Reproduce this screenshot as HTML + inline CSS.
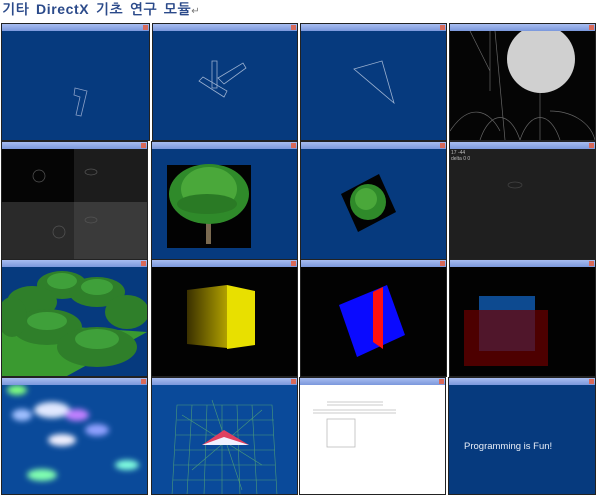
<!DOCTYPE html>
<html><head><meta charset="utf-8"><style>
body{margin:0;width:599px;height:499px;background:#fff;position:relative;overflow:hidden;font-family:"Liberation Sans","NanumGothic",sans-serif}
.t{position:absolute;left:2px;top:1px;font-size:14px;letter-spacing:0.6px;word-spacing:2px;font-weight:bold;color:#2b4a8a;font-family:"Liberation Sans","NanumGothic",sans-serif}
.w{position:absolute;border:1px solid #222;overflow:hidden}
.tb{position:absolute;left:0;top:0;right:0;height:7px;background:linear-gradient(#a8bdf0,#7b98dc)}
.tb:after{content:"";position:absolute;right:1px;top:1px;width:5px;height:5px;background:#d86a5a}
.c{position:absolute;left:0;top:7px;right:0;bottom:0}
svg{position:absolute;left:0;top:0}
</style></head><body>
<div class="t">기타 DirectX 기초 연구 모듈<span style="font-weight:normal;font-size:10px;color:#777">↵</span></div>

<!-- row1 -->
<div class="w" style="left:1px;top:23px;width:147px;height:116px"><div class="tb"></div><div class="c" style="background:#063a7e">
<svg width="147" height="109"><path d="M73 57l12 3-6 25-5-1 4-18-6-2z" fill="none" stroke="#8aa0c8" stroke-width="0.8"/></svg></div></div>
<div class="w" style="left:152px;top:23px;width:144px;height:116px"><div class="tb"></div><div class="c" style="background:#063a7e">
<svg width="144" height="109"><g fill="none" stroke="#9ab0d0" stroke-width="0.8"><path d="M59 30h5v27h-5z"/><path d="M46 50l25 16 3-6-24-14z"/><path d="M65 47l25-15 3 5-22 16z"/></g></svg></div></div>
<div class="w" style="left:300px;top:23px;width:145px;height:116px"><div class="tb"></div><div class="c" style="background:#063a7e">
<svg width="145" height="109"><path d="M53 38l28-8 12 42z" fill="none" stroke="#9ab0d0" stroke-width="0.8"/></svg></div></div>
<div class="w" style="left:449px;top:23px;width:145px;height:116px"><div class="tb"></div><div class="c" style="background:#050505">
<svg width="145" height="109"><g fill="none" stroke="#666" stroke-width="0.7"><path d="M40 0v60M45 0l10 109M20 0l20 40M90 20v89M30 109c10-30 30-30 40 0M70 109c10-30 30-30 40 0M0 100c20-30 40-20 50 0M100 80c20 0 40 10 45 29"/></g><circle cx="91" cy="28" r="34" fill="#d0d0d0"/></svg></div></div>

<!-- row2 -->
<div class="w" style="left:1px;top:141px;width:145px;height:117px"><div class="tb"></div><div class="c">
<div style="position:absolute;left:0;top:0;width:72px;height:53px;background:#050505"></div>
<div style="position:absolute;left:72px;top:0;right:0;height:53px;background:#1c1c1c"></div>
<div style="position:absolute;left:0;top:53px;width:72px;bottom:0;background:#2a2a2a"></div>
<div style="position:absolute;left:72px;top:53px;right:0;bottom:0;background:#3a3a3a"></div>
<svg width="145" height="110"><g fill="none" stroke="#555" stroke-width="0.7"><circle cx="37" cy="27" r="6"/><ellipse cx="89" cy="23" rx="6" ry="3"/><circle cx="57" cy="83" r="6"/><ellipse cx="89" cy="71" rx="6" ry="3"/></g></svg></div></div>
<div class="w" style="left:151px;top:141px;width:145px;height:117px"><div class="tb"></div><div class="c" style="background:#063a7e">
<svg width="145" height="110"><rect x="15" y="16" width="84" height="83" fill="#020202"/><rect x="54" y="70" width="5" height="25" fill="#7a6a50"/><ellipse cx="57" cy="45" rx="40" ry="30" fill="#2f8a2a"/><ellipse cx="57" cy="40" rx="28" ry="22" fill="#4aa83a"/><ellipse cx="55" cy="55" rx="30" ry="10" fill="#2a7a25"/></svg></div></div>
<div class="w" style="left:300px;top:141px;width:145px;height:117px"><div class="tb"></div><div class="c" style="background:#063a7e">
<svg width="145" height="110"><path d="M40 45l38-20 17 38-38 20z" fill="#020202"/><ellipse cx="67" cy="53" rx="18" ry="18" fill="#2f8a2a"/><ellipse cx="65" cy="50" rx="11" ry="11" fill="#4aa83a"/></svg></div></div>
<div class="w" style="left:449px;top:141px;width:145px;height:117px"><div class="tb"></div><div class="c" style="background:#1f1f1f">
<div style="position:absolute;left:1px;top:1px;font-size:5px;color:#bbb;line-height:6px">17 -44<br>delta 0 0</div>
<svg width="145" height="110"><ellipse cx="65" cy="36" rx="7" ry="3" fill="none" stroke="#444" stroke-width="0.7"/></svg></div></div>

<!-- row3 -->
<div class="w" style="left:1px;top:259px;width:145px;height:116px"><div class="tb"></div><div class="c" style="background:#063a7e">
<svg width="145" height="109"><path d="M0 55l145 10-80 44H0z" fill="#3a9a30"/><g fill="#2f7f2a"><ellipse cx="60" cy="18" rx="25" ry="14"/><ellipse cx="30" cy="35" rx="25" ry="16"/><ellipse cx="95" cy="25" rx="28" ry="15"/><ellipse cx="125" cy="45" rx="22" ry="17"/><ellipse cx="45" cy="60" rx="35" ry="18"/><ellipse cx="95" cy="80" rx="40" ry="20"/><ellipse cx="10" cy="50" rx="15" ry="20"/></g><g fill="#3fa03a"><ellipse cx="60" cy="14" rx="15" ry="8"/><ellipse cx="95" cy="20" rx="16" ry="8"/><ellipse cx="45" cy="54" rx="20" ry="9"/><ellipse cx="95" cy="72" rx="22" ry="10"/></g></svg></div></div>
<div class="w" style="left:151px;top:259px;width:145px;height:116px"><div class="tb"></div><div class="c" style="background:#020202">
<svg width="145" height="109"><defs><linearGradient id="y1"><stop offset="0" stop-color="#3a3000"/><stop offset="1" stop-color="#b0a000"/></linearGradient></defs><path d="M35 23l40-5v63l-40-4z" fill="url(#y1)"/><path d="M75 18l28 6v54l-28 4z" fill="#e8e000"/></svg></div></div>
<div class="w" style="left:300px;top:259px;width:145px;height:116px"><div class="tb"></div><div class="c" style="background:#020202">
<svg width="145" height="109"><path d="M38 38l48-20 18 50-48 22z" fill="#0a0aff"/><path d="M72 25l10-5v62l-10-7z" fill="#ff1010"/></svg></div></div>
<div class="w" style="left:449px;top:259px;width:145px;height:116px"><div class="tb"></div><div class="c" style="background:#020202">
<div style="position:absolute;left:29px;top:29px;width:56px;height:55px;background:#0d4a90"></div>
<div style="position:absolute;left:14px;top:43px;width:84px;height:56px;background:rgba(110,0,0,0.7)"></div></div></div>

<!-- row4 -->
<div class="w" style="left:1px;top:377px;width:145px;height:116px"><div class="tb"></div><div class="c" style="background:#0a4a9a">
<svg width="145" height="109"><defs><filter id="b"><feGaussianBlur stdDeviation="3"/></filter></defs><g filter="url(#b)"><ellipse cx="50" cy="25" rx="18" ry="8" fill="#e0e8ff"/><ellipse cx="75" cy="30" rx="12" ry="6" fill="#c080ff"/><ellipse cx="20" cy="30" rx="10" ry="6" fill="#a0c0ff"/><ellipse cx="95" cy="45" rx="12" ry="6" fill="#90a0ff"/><ellipse cx="60" cy="55" rx="14" ry="6" fill="#f0f0ff"/><ellipse cx="40" cy="90" rx="15" ry="6" fill="#80ffb0"/><ellipse cx="125" cy="80" rx="12" ry="5" fill="#80ffe0"/><ellipse cx="15" cy="5" rx="10" ry="5" fill="#80ff80"/></g></svg></div></div>
<div class="w" style="left:151px;top:377px;width:145px;height:116px"><div class="tb"></div><div class="c" style="background:#0a4a9a">
<svg width="145" height="109"><g stroke="#4a9a7a" stroke-width="0.6" fill="none"><path d="M25 20h95l5 90H20z"/><path d="M25 35h97M24 50h98M23 65h100M22 80h101M21 95h103M40 20l-5 90M55 20l-3 90M70 20v90M85 20l3 90M100 20l5 90"/><path d="M30 30l80 50M110 25l-70 60M60 15l30 90"/></g><path d="M50 60l22-15 25 15z" fill="#e04060"/><path d="M50 60l22-8 25 8z" fill="#f0f0ff"/></svg></div></div>
<div class="w" style="left:299px;top:377px;width:145px;height:116px"><div class="tb"></div><div class="c" style="background:#fff">
<svg width="145" height="109"><g stroke="#bbb" stroke-width="0.8" fill="none"><path d="M27 17h56M27 20h56M13 25h83M13 28h83"/><rect x="27" y="34" width="28" height="28"/></g></svg></div></div>
<div class="w" style="left:448px;top:377px;width:146px;height:116px"><div class="tb"></div><div class="c" style="background:#063a7e">
<div style="position:absolute;left:15px;top:56px;font-size:9.5px;color:#e8eef8;font-family:'Liberation Sans',sans-serif">Programming is Fun!</div></div></div>
</body></html>
